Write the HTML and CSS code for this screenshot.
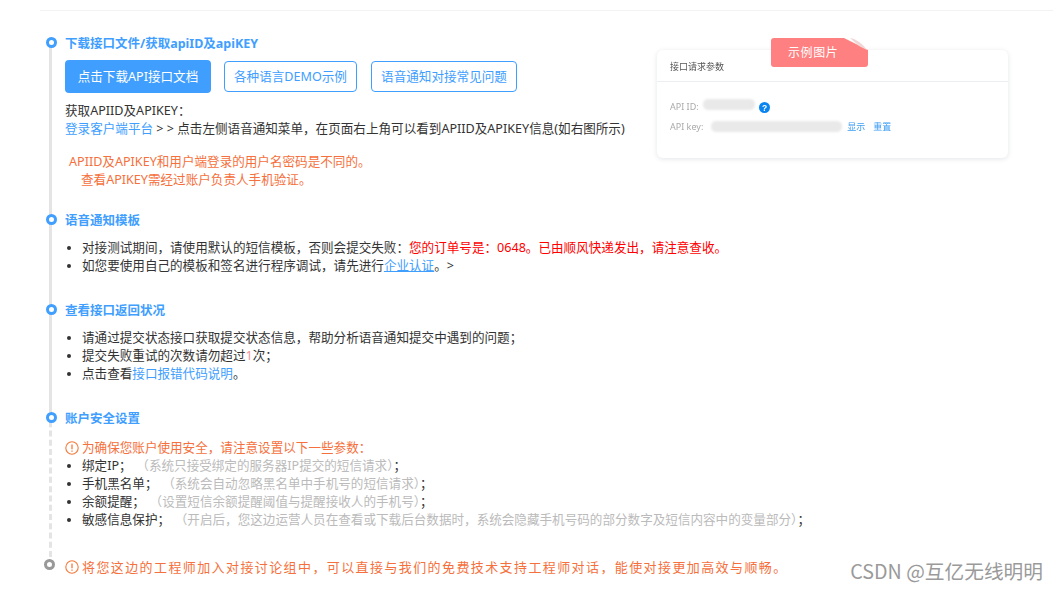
FILE: index.html
```html
<!DOCTYPE html>
<html lang="zh-CN">
<head>
  <meta charset="UTF-8" />
  <title>语音通知接口对接</title>
  <link rel="stylesheet" href="styles.css">
</head>
<body>
  <div class="top-rule"></div>

  <main class="steps">
    <!-- step 1 -->
    <section class="step step-first">
      <span class="dot"></span>
      <div class="step-left">
        <h3 class="step-title">下载接口文件/获取apiID及apiKEY</h3>
        <div class="btn-row">
          <a class="btn btn-primary">点击下载API接口文档</a>
          <a class="btn btn-outline btn-demo">各种语言DEMO示例</a>
          <a class="btn btn-outline btn-faq">语音通知对接常见问题</a>
        </div>
        <p class="line line-top">获取APIID及APIKEY：</p>
        <p class="line"><a class="link">登录客户端平台</a> &gt; &gt; 点击左侧语音通知菜单，在页面右上角可以看到APIID及APIKEY信息(如右图所示)</p>
        <p class="line warn warn-first">APIID及APIKEY和用户端登录的用户名密码是不同的。</p>
        <p class="line warn warn-second">查看APIKEY需经过账户负责人手机验证。</p>
      </div>

      <div class="sample">
        <div class="sample-tag">
          示例图片
          <svg class="tag-fold" width="24" height="14" viewBox="0 0 24 14">
            <polygon points="0,0 24,0 24,12" fill="#fff" />
            <path d="M6 0 C12 1 18 5 23 12 L15 8 Z" fill="#f1d6d6" />
          </svg>
        </div>
        <div class="sample-head">接口请求参数</div>
        <div class="sample-body">
          <div class="sample-row">
            <span>API ID:</span>
            <i class="mask mask-id"></i>
            <svg class="help" width="11" height="11" viewBox="0 0 11 11">
              <circle cx="5.5" cy="5.5" r="5.5" fill="#0a84f0" />
              <text x="5.5" y="8.5" text-anchor="middle" fill="#fff" font-size="8.5" font-weight="700" font-family="Liberation Sans, sans-serif">?</text>
            </svg>
          </div>
          <div class="sample-row sample-row-key">
            <span>API key:</span>
            <i class="mask mask-key"></i>
            <a class="sample-link">显示</a>
            <a class="sample-link">重置</a>
          </div>
        </div>
      </div>
    </section>

    <!-- step 2 -->
    <section class="step step-template">
      <span class="dot"></span>
      <h3 class="step-title">语音通知模板</h3>
      <ul class="list">
        <li>对接测试期间，请使用默认的短信模板，否则会提交失败：<span class="red">您的订单号是：0648。已由顺风快递发出，请注意查收。</span></li>
        <li>如您要使用自己的模板和签名进行程序调试，请先进行<a class="link link-under">企业认证</a>。&gt;</li>
      </ul>
    </section>

    <!-- step 3 -->
    <section class="step step-status">
      <span class="dot"></span>
      <h3 class="step-title">查看接口返回状况</h3>
      <ul class="list">
        <li>请通过提交状态接口获取提交状态信息，帮助分析语音通知提交中遇到的问题；</li>
        <li>提交失败重试的次数请勿超过<span class="pink">1</span>次；</li>
        <li>点击查看<a class="link">接口报错代码说明</a>。</li>
      </ul>
    </section>

    <!-- step 4 -->
    <section class="step step-safe">
      <span class="dot"></span>
      <h3 class="step-title">账户安全设置</h3>
      <p class="line warn notice">
        <svg class="warn-icon" width="14" height="14" viewBox="0 0 14 14">
          <circle cx="7" cy="7" r="6.2" fill="none" stroke="#f5793b" stroke-width="1.1" />
          <path d="M7 3.4V8.2M7 9.6V10.8" stroke="#f5793b" stroke-width="1.3" fill="none" />
        </svg>
        为确保您账户使用安全，请注意设置以下一些参数：
      </p>
      <ul class="list">
        <li>绑定IP；<span class="gray">（系统只接受绑定的服务器IP提交的短信请求）</span>；</li>
        <li>手机黑名单；<span class="gray">（系统会自动忽略黑名单中手机号的短信请求）</span>；</li>
        <li>余额提醒；<span class="gray">（设置短信余额提醒阈值与提醒接收人的手机号）</span>；</li>
        <li>敏感信息保护；<span class="gray">（开启后，您这边运营人员在查看或下载后台数据时，系统会隐藏手机号码的部分数字及短信内容中的变量部分）</span>；</li>
      </ul>
    </section>

    <!-- last row -->
    <section class="step-end">
      <span class="dot dot-end"></span>
      <p class="line warn notice end-text">
        <svg class="warn-icon" width="14" height="14" viewBox="0 0 14 14">
          <circle cx="7" cy="7" r="6.2" fill="none" stroke="#f5793b" stroke-width="1.1" />
          <path d="M7 3.4V8.2M7 9.6V10.8" stroke="#f5793b" stroke-width="1.3" fill="none" />
        </svg>
        将您这边的工程师加入对接讨论组中，可以直接与我们的免费技术支持工程师对话，能使对接更加高效与顺畅。
      </p>
    </section>
  </main>

  <div class="watermark">CSDN @互亿无线明明</div>
</body>
</html>
```

FILE: styles.css
```css
* {
  box-sizing: border-box;
}
html, body {
  height: 100%;
  margin: 0;
  overflow: hidden;
}
body {
  background: #fff;
  color: #333;
  font-family: "Noto Sans", "Noto Sans CJK SC", sans-serif;
  font-size: 12.58px;
  line-height: 18px;
  position: relative;
}

.top-rule {
  height: 11px;
  margin: 0 4px 0 40px;
  border-bottom: 1px solid #f2f2f2;
}

.steps {
  padding: 26px 0 0 49px;
}
.step {
  position: relative;
  border-left: 3px solid #e4e4e4;
  padding-left: 13px;
  white-space: nowrap;
}
.step-first {
  display: flex;
  align-items: flex-start;
  padding-bottom: 25px;
}
.step-template {
  padding-bottom: 29px;
}
.step-status {
  padding-bottom: 29px;
}
.step-safe {
  border-left: 3px dashed #e4e4e4;
  padding-bottom: 28px;
}
.step-left {
  width: 592px;
  flex: none;
}

.dot {
  position: absolute;
  left: -6px;
  top: 0;
  width: 11px;
  height: 11px;
  border: 3px solid #409eff;
  border-radius: 50%;
  background: #fff;
}
.dot-end {
  border-color: #999;
  left: -5px;
  top: 2px;
}

.step-title {
  margin: 0;
  padding-top: 1px;
  font-size: 12.5px;
  line-height: 12px;
  font-weight: 700;
  color: #409eff;
}

.btn-row {
  display: flex;
  align-items: center;
  margin-top: 10px;
}
.btn {
  display: block;
  border-radius: 4px;
  text-align: center;
}
.btn-primary {
  width: 146px;
  height: 33px;
  line-height: 33px;
  background: #409eff;
  color: #fff;
}
.btn-outline {
  height: 31px;
  line-height: 29px;
  border: 1px solid #409eff;
  color: #409eff;
}
.btn-demo {
  width: 133px;
  margin-left: 13px;
}
.btn-faq {
  width: 146px;
  margin-left: 14px;
}

.line {
  margin: 0;
}
.line-top {
  margin-top: 9px;
}
.link {
  color: #409eff;
}
.link-under {
  text-decoration: underline;
}
.warn {
  color: #f5703c;
}
.warn-first {
  margin: 15px 0 0 4px;
}
.warn-second {
  margin-left: 16px;
}
.notice {
  display: flex;
  align-items: center;
  gap: 3px;
}
.warn-icon {
  flex: none;
}

.list {
  margin: 12px 0 0;
  padding-left: 17px;
}
.notice + .list {
  margin-top: 0;
}
.step-safe .notice {
  margin-top: 14px;
}
.red {
  color: #f00;
}
.pink {
  color: #f78f9a;
}
.gray {
  color: #bbb;
  margin-left: 11px;
}

.step-end {
  position: relative;
  padding-left: 16px;
  white-space: nowrap;
}
.end-text {
  font-size: 13px;
  letter-spacing: 1.4px;
  padding-top: 1px;
}

/* screenshot pasted into the page, slightly soft */
.sample {
  position: relative;
  width: 351px;
  height: 108px;
  flex: none;
  margin-top: 13px;
  border-radius: 6px;
  background: #fff;
  box-shadow: 0 1px 5px rgba(60, 70, 90, 0.14);
  font-size: 9px;
  color: #aaa;
}
.sample-tag {
  position: absolute;
  left: 114px;
  top: -12px;
  width: 97px;
  height: 29px;
  padding-left: 17px;
  border-radius: 3px;
  background: #ff8080;
  color: #fff;
  font-size: 12px;
  line-height: 29px;
  letter-spacing: 0.6px;
  z-index: 1;
}
.tag-fold {
  position: absolute;
  right: 0;
  top: 0;
}
.sample-head {
  height: 32px;
  padding: 8px 0 0 13px;
  border-bottom: 1px solid #eceef2;
  color: #555;
  line-height: 18px;
  filter: blur(0.3px);
}
.sample-body {
  padding: 16px 0 0 13px;
  filter: blur(0.4px);
}
.sample-row {
  display: flex;
  align-items: center;
  height: 18px;
}
.sample-row-key {
  margin-top: 2px;
}
.mask {
  display: block;
  height: 11px;
  border-radius: 5px;
  background: #e9e9e9;
  filter: blur(1px);
}
.mask-id {
  width: 52px;
  margin: -6px 0 0 4px;
}
.mask-key {
  width: 131px;
  margin: -2px 0 0 8px;
}
.help {
  margin-left: 4px;
}
.sample-link {
  color: #3d9df5;
  margin-left: 5px;
  margin-right: 3px;
}

.watermark {
  position: absolute;
  right: 14px;
  top: 558px;
  color: #9a9a9a;
  font-family: "Noto Sans CJK SC", sans-serif;
  font-size: 19.7px;
  line-height: 26px;
  white-space: nowrap;
}
```
